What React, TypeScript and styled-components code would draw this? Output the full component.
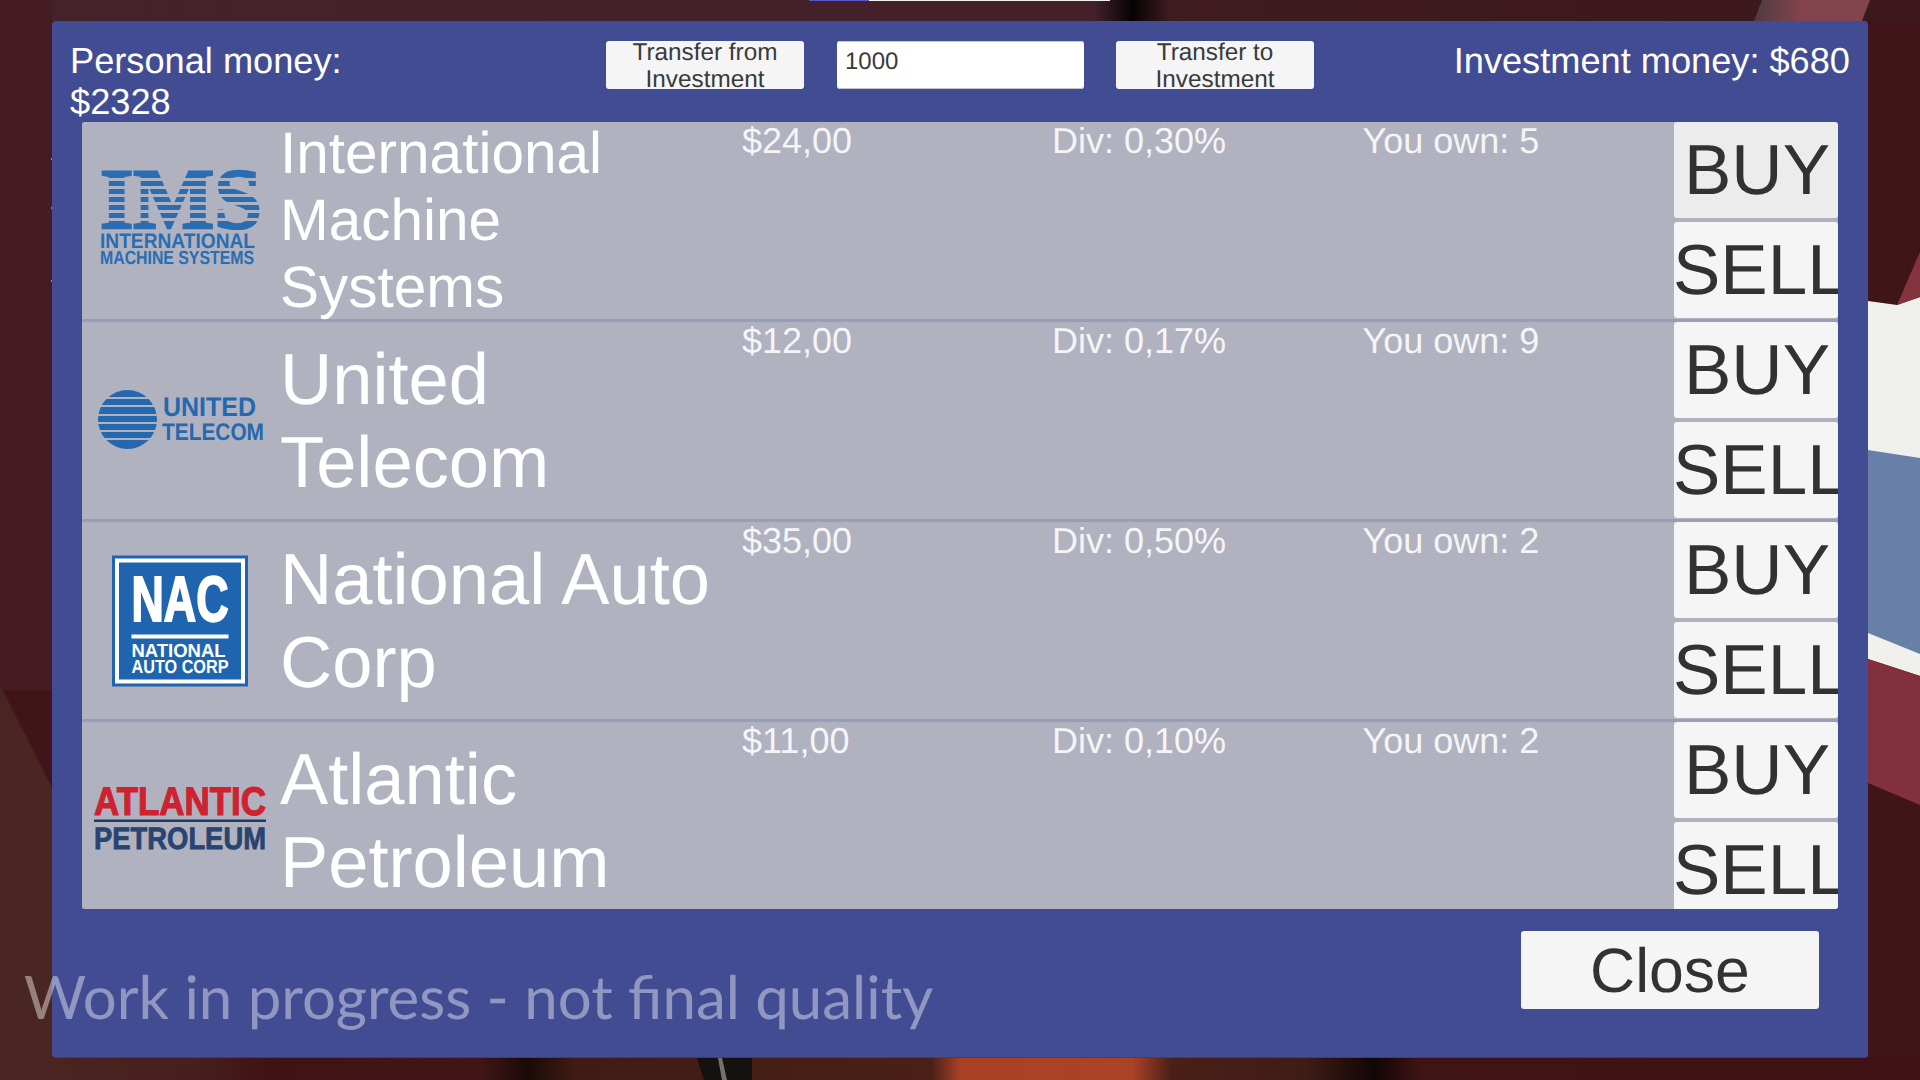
import React from 'react'
import styled, { createGlobalStyle } from 'styled-components';

const SANS = '"Liberation Sans", Arial, sans-serif';
const ROW_BG = '#b0b2c0';
const LOGO_BLUE = '#2a6db2';

const Global = createGlobalStyle`
    html, body {
        margin: 0;
        padding: 0;
        background: #3f1418;
        overflow: hidden;
    }
    body {
        font-family: ${SANS};
        text-rendering: geometricPrecision;
    }
`;

const Screen = styled.div`
    position: relative;
    width: 1920px;
    height: 1080px;
    box-sizing: border-box;
    padding: 21px 52px 22px;
    overflow: hidden;
`;

const Scene = styled.svg`
    position: absolute;
    left: 0;
    top: 0;
    width: 1920px;
    height: 1080px;
`;

const Panel = styled.div`
    position: relative;
    height: 1037px;
    box-sizing: border-box;
    padding-top: 19px;
    background: #424c93;
    border-radius: 4px;
    box-shadow: inset 0 -1px 0 #363f80;
`;

const Header = styled.div`
    display: flex;
    align-items: flex-start;
    height: 82px;
    padding: 0 18px;
    color: #fff;
    font-size: 36.2px;
    line-height: 41px;
`;

const Personal = styled.div`
    width: 300px;
    margin-right: 236px;
`;

const Investment = styled.div`
    flex: 1;
    text-align: right;
`;

const TransferButton = styled.div`
    display: flex;
    align-items: center;
    justify-content: center;
    box-sizing: border-box;
    width: 198px;
    height: 48px;
    margin-top: 1px;
    padding-top: 2px;
    background: #f5f5f5;
    border-radius: 3px;
    color: #3a3a3a;
    font-size: 24.3px;
    line-height: 27px;
    text-align: center;
`;

const Amount = styled.input`
    display: block;
    box-sizing: border-box;
    width: 247px;
    height: 48px;
    margin: 1px 32px 0 33px;
    padding: 0 8px 6px;
    background: #fff;
    border: 0;
    border-radius: 3px;
    box-shadow: inset 0 -1px 0 #c4c4c4, inset 0 1px 0 #c4c4c4;
    color: #3a3a3a;
    font-family: ${SANS};
    font-size: 24px;
    text-rendering: geometricPrecision;
    outline: none;
`;

const List = styled.div`
    display: flex;
    flex-direction: column;
    gap: 3px;
    height: 787px;
    margin: 0 30px;
    background: #989db8;
    border-radius: 3px;
    overflow: hidden;
`;

const Row = styled.div`
    display: grid;
    grid-template-columns: 198px 462px 310px 310.5px 312.5px 1fr;
    flex: 0 0 197px;
    height: 197px;
    background: ${ROW_BG};
`;

const LogoCell = styled.div`
    display: flex;
    align-items: center;
    justify-content: center;
    padding-right: 2px;
`;

const Logo = styled.svg`
    display: block;
    width: 172px;
    height: 172px;
    font-family: ${SANS};
    font-weight: 700;
`;

const Name = styled.div<{ $size: number }>`
    align-self: center;
    margin-top: ${props => (props.$size > 60 ? 2 : -2)}px;
    padding-right: 20px;
    color: #fff;
    font-size: ${props => props.$size}px;
    line-height: ${props => (props.$size > 60 ? 83 : 67)}px;
`;

const Stat = styled.div`
    margin-top: -2px;
    color: #f5f5f7;
    font-size: 36px;
    line-height: 41px;
`;

const Actions = styled.div`
    display: flex;
    flex-direction: column;
    gap: 4px;
    min-width: 0;
    margin-left: -1px;
`;

const TradeButton = styled.div<{ $hover?: boolean; $overflow?: boolean }>`
    flex: 0 0 96px;
    height: 96px;
    box-sizing: border-box;
    background: ${props => (props.$hover ? '#ececec' : '#f5f5f5')};
    border-radius: 3px;
    color: #323232;
    font-size: 71px;
    line-height: 98px;
    text-align: ${props => (props.$overflow ? 'left' : 'center')};
    text-indent: ${props => (props.$overflow ? '-1px' : '2px')};
    white-space: nowrap;
    overflow: hidden;
`;

const Footer = styled.div`
    display: flex;
    justify-content: flex-end;
    margin: 22px 49px 0 0;
`;

const CloseButton = styled.div`
    width: 298px;
    height: 78px;
    background: #f5f5f5;
    border-radius: 3px;
    color: #323232;
    font-size: 62.5px;
    line-height: 80px;
    text-align: center;
`;

const Watermark = styled.div`
    position: absolute;
    left: 24px;
    top: 955px;
    color: rgba(255, 255, 255, 0.42);
    font-family: Lato, sans-serif;
    font-size: 60px;
    line-height: 82px;
    white-space: nowrap;
`;

function Background() {
    return (
        <Scene viewBox="0 0 1920 1080">
            <defs>
                <linearGradient id="top" x1="0" x2="1" y1="0" y2="0">
                    <stop offset="0" stopColor="#45212a" />
                    <stop offset="0.57" stopColor="#43202a" />
                    <stop offset="0.59" stopColor="#070304" />
                    <stop offset="0.61" stopColor="#3f1c22" />
                    <stop offset="1" stopColor="#3c171c" />
                </linearGradient>
                <linearGradient id="strip" x1="0" x2="1" y1="0" y2="0">
                    <stop offset="0" stopColor="#4e3b44" />
                    <stop offset="0.4" stopColor="#82434c" />
                    <stop offset="1" stopColor="#80444c" />
                </linearGradient>
                <linearGradient id="floor" x1="0" x2="1" y1="0" y2="0">
                    <stop offset="0" stopColor="#4a2622" />
                    <stop offset="0.1" stopColor="#471f1e" />
                    <stop offset="0.14" stopColor="#401215" />
                    <stop offset="0.25" stopColor="#411517" />
                    <stop offset="0.275" stopColor="#1a0a08" />
                    <stop offset="0.3" stopColor="#401c14" />
                    <stop offset="0.485" stopColor="#4a2018" />
                    <stop offset="0.5" stopColor="#a84126" />
                    <stop offset="0.59" stopColor="#aa4226" />
                    <stop offset="0.61" stopColor="#4a2018" />
                    <stop offset="0.68" stopColor="#3f1c16" />
                    <stop offset="0.716" stopColor="#120606" />
                    <stop offset="0.74" stopColor="#3f1414" />
                    <stop offset="1" stopColor="#3f1215" />
                </linearGradient>
            </defs>
            <rect width="1920" height="1080" fill="#401519" />
            <rect width="1920" height="21" fill="url(#top)" />
            <polygon points="0,0 52,0 52,690 0,690" fill="#451c22" />
            <rect x="0" y="1058" width="1920" height="22" fill="url(#floor)" />
            <polygon points="0,685 52,788 52,1058 0,1058" fill="#4a2622" />
            <rect x="809" y="0" width="60" height="1" fill="#5b55c4" />
            <rect x="869" y="0" width="241" height="1" fill="#f4f2f2" />
            <polygon points="1754,21 1762,0 1870,0 1862,21" fill="url(#strip)" />
            <rect x="51" y="158" width="2" height="2" fill="#9c8a8a" />
            <rect x="51" y="207" width="2" height="2" fill="#9c8a8a" />
            <rect x="51" y="280" width="2" height="2" fill="#9c8a8a" />
            <polygon points="1868,301 1897,305 1920,297 1920,676 1868,659" fill="#f0f0ec" />
            <polygon points="1897,305 1920,252 1920,297" fill="#84343f" />
            <polygon points="1868,450 1920,458 1920,654 1868,633" fill="#6880a8" />
            <polygon points="1868,659 1920,676 1920,805 1868,783" fill="#82303b" />
            <polygon points="697,1058 752,1058 752,1080 704,1080" fill="#151110" />
            <polygon points="718,1058 722,1058 727,1080 722,1080" fill="#77736c" />
        </Scene>
    );
}

function ImsLogo() {
    const gaps = [42, 50, 58, 66, 74, 82];
    return (
        <Logo viewBox="0 0 172 172">
            <text x="6" y="91.5" fontFamily='"Liberation Serif", serif' fontSize="86" textLength="162" lengthAdjust="spacingAndGlyphs" fill={LOGO_BLUE} stroke={LOGO_BLUE} strokeWidth="2.5">IMS</text>
            {gaps.map(y => <rect key={y} x="0" y={y} width="172" height="3" fill={ROW_BG} />)}
            <text x="6" y="112" fontSize="21" textLength="155" lengthAdjust="spacingAndGlyphs" fill={LOGO_BLUE}>INTERNATIONAL</text>
            <text x="6" y="128" fontSize="19" textLength="154" lengthAdjust="spacingAndGlyphs" fill={LOGO_BLUE}>MACHINE SYSTEMS</text>
        </Logo>
    );
}

function TelecomLogo() {
    const gaps = [62, 70, 79, 87, 95, 103];
    return (
        <Logo viewBox="0 0 172 172">
            <circle cx="33.5" cy="84.5" r="29.5" fill="#2468b0" />
            {gaps.map(y => <rect key={y} x="0" y={y} width="66" height="2" fill={ROW_BG} />)}
            <text x="69" y="81" fontSize="27" textLength="93" lengthAdjust="spacingAndGlyphs" fill="#2468b0">UNITED</text>
            <text x="68" y="104.5" fontSize="24" textLength="102" lengthAdjust="spacingAndGlyphs" fill="#2468b0">TELECOM</text>
        </Logo>
    );
}

function NacLogo() {
    return (
        <Logo viewBox="0 0 172 172">
            <rect x="18" y="20.5" width="136" height="131" fill="#1f64ae" />
            <rect x="23" y="25.5" width="126" height="121" fill="none" stroke="#fff" strokeWidth="4" />
            <text x="37.5" y="86" fontSize="64" textLength="97" lengthAdjust="spacingAndGlyphs" fill="#fff" stroke="#fff" strokeWidth="2">NAC</text>
            <rect x="37.5" y="99.5" width="97" height="4" fill="#fff" />
            <text x="37.5" y="122" fontSize="19" textLength="94" lengthAdjust="spacingAndGlyphs" fill="#fff">NATIONAL</text>
            <text x="37.5" y="138" fontSize="19" textLength="97" lengthAdjust="spacingAndGlyphs" fill="#fff">AUTO CORP</text>
        </Logo>
    );
}

function AtlanticLogo() {
    return (
        <Logo viewBox="0 0 172 172">
            <text x="0" y="79.5" fontSize="40" textLength="172" lengthAdjust="spacingAndGlyphs" fill="#cf2230" stroke="#cf2230" strokeWidth="1.2">ATLANTIC</text>
            <rect x="0" y="84.5" width="172" height="2.5" fill="#1f3a63" />
            <text x="0" y="114" fontSize="31" textLength="172" lengthAdjust="spacingAndGlyphs" fill="#284470" stroke="#284470" strokeWidth="0.8">PETROLEUM</text>
        </Logo>
    );
}

const stocks = [
    { name: 'International Machine Systems', size: 58.5, logo: <ImsLogo />, price: '$24,00', div: '0,30%', own: 5 },
    { name: 'United Telecom', size: 72.3, logo: <TelecomLogo />, price: '$12,00', div: '0,17%', own: 9 },
    { name: 'National Auto Corp', size: 72.3, logo: <NacLogo />, price: '$35,00', div: '0,50%', own: 2 },
    { name: 'Atlantic Petroleum', size: 72.3, logo: <AtlanticLogo />, price: '$11,00', div: '0,10%', own: 2 },
];

export default function App() {
    return (
        <Screen>
            <Global />
            <Background />
            <Panel>
                <Header>
                    <Personal>Personal money: $2328</Personal>
                    <TransferButton>Transfer from Investment</TransferButton>
                    <Amount readOnly value="1000" />
                    <TransferButton>Transfer to Investment</TransferButton>
                    <Investment>Investment money: $680</Investment>
                </Header>
                <List>
                    {stocks.map((stock, i) => (
                        <Row key={stock.name}>
                            <LogoCell>{stock.logo}</LogoCell>
                            <Name $size={stock.size}>{stock.name}</Name>
                            <Stat>{stock.price}</Stat>
                            <Stat>Div: {stock.div}</Stat>
                            <Stat>You own: {stock.own}</Stat>
                            <Actions>
                                <TradeButton $hover={i === 0}>BUY</TradeButton>
                                <TradeButton $overflow>SELL</TradeButton>
                            </Actions>
                        </Row>
                    ))}
                </List>
                <Footer>
                    <CloseButton>Close</CloseButton>
                </Footer>
            </Panel>
            <Watermark>Work in progress - not final quality</Watermark>
        </Screen>
    );
}
